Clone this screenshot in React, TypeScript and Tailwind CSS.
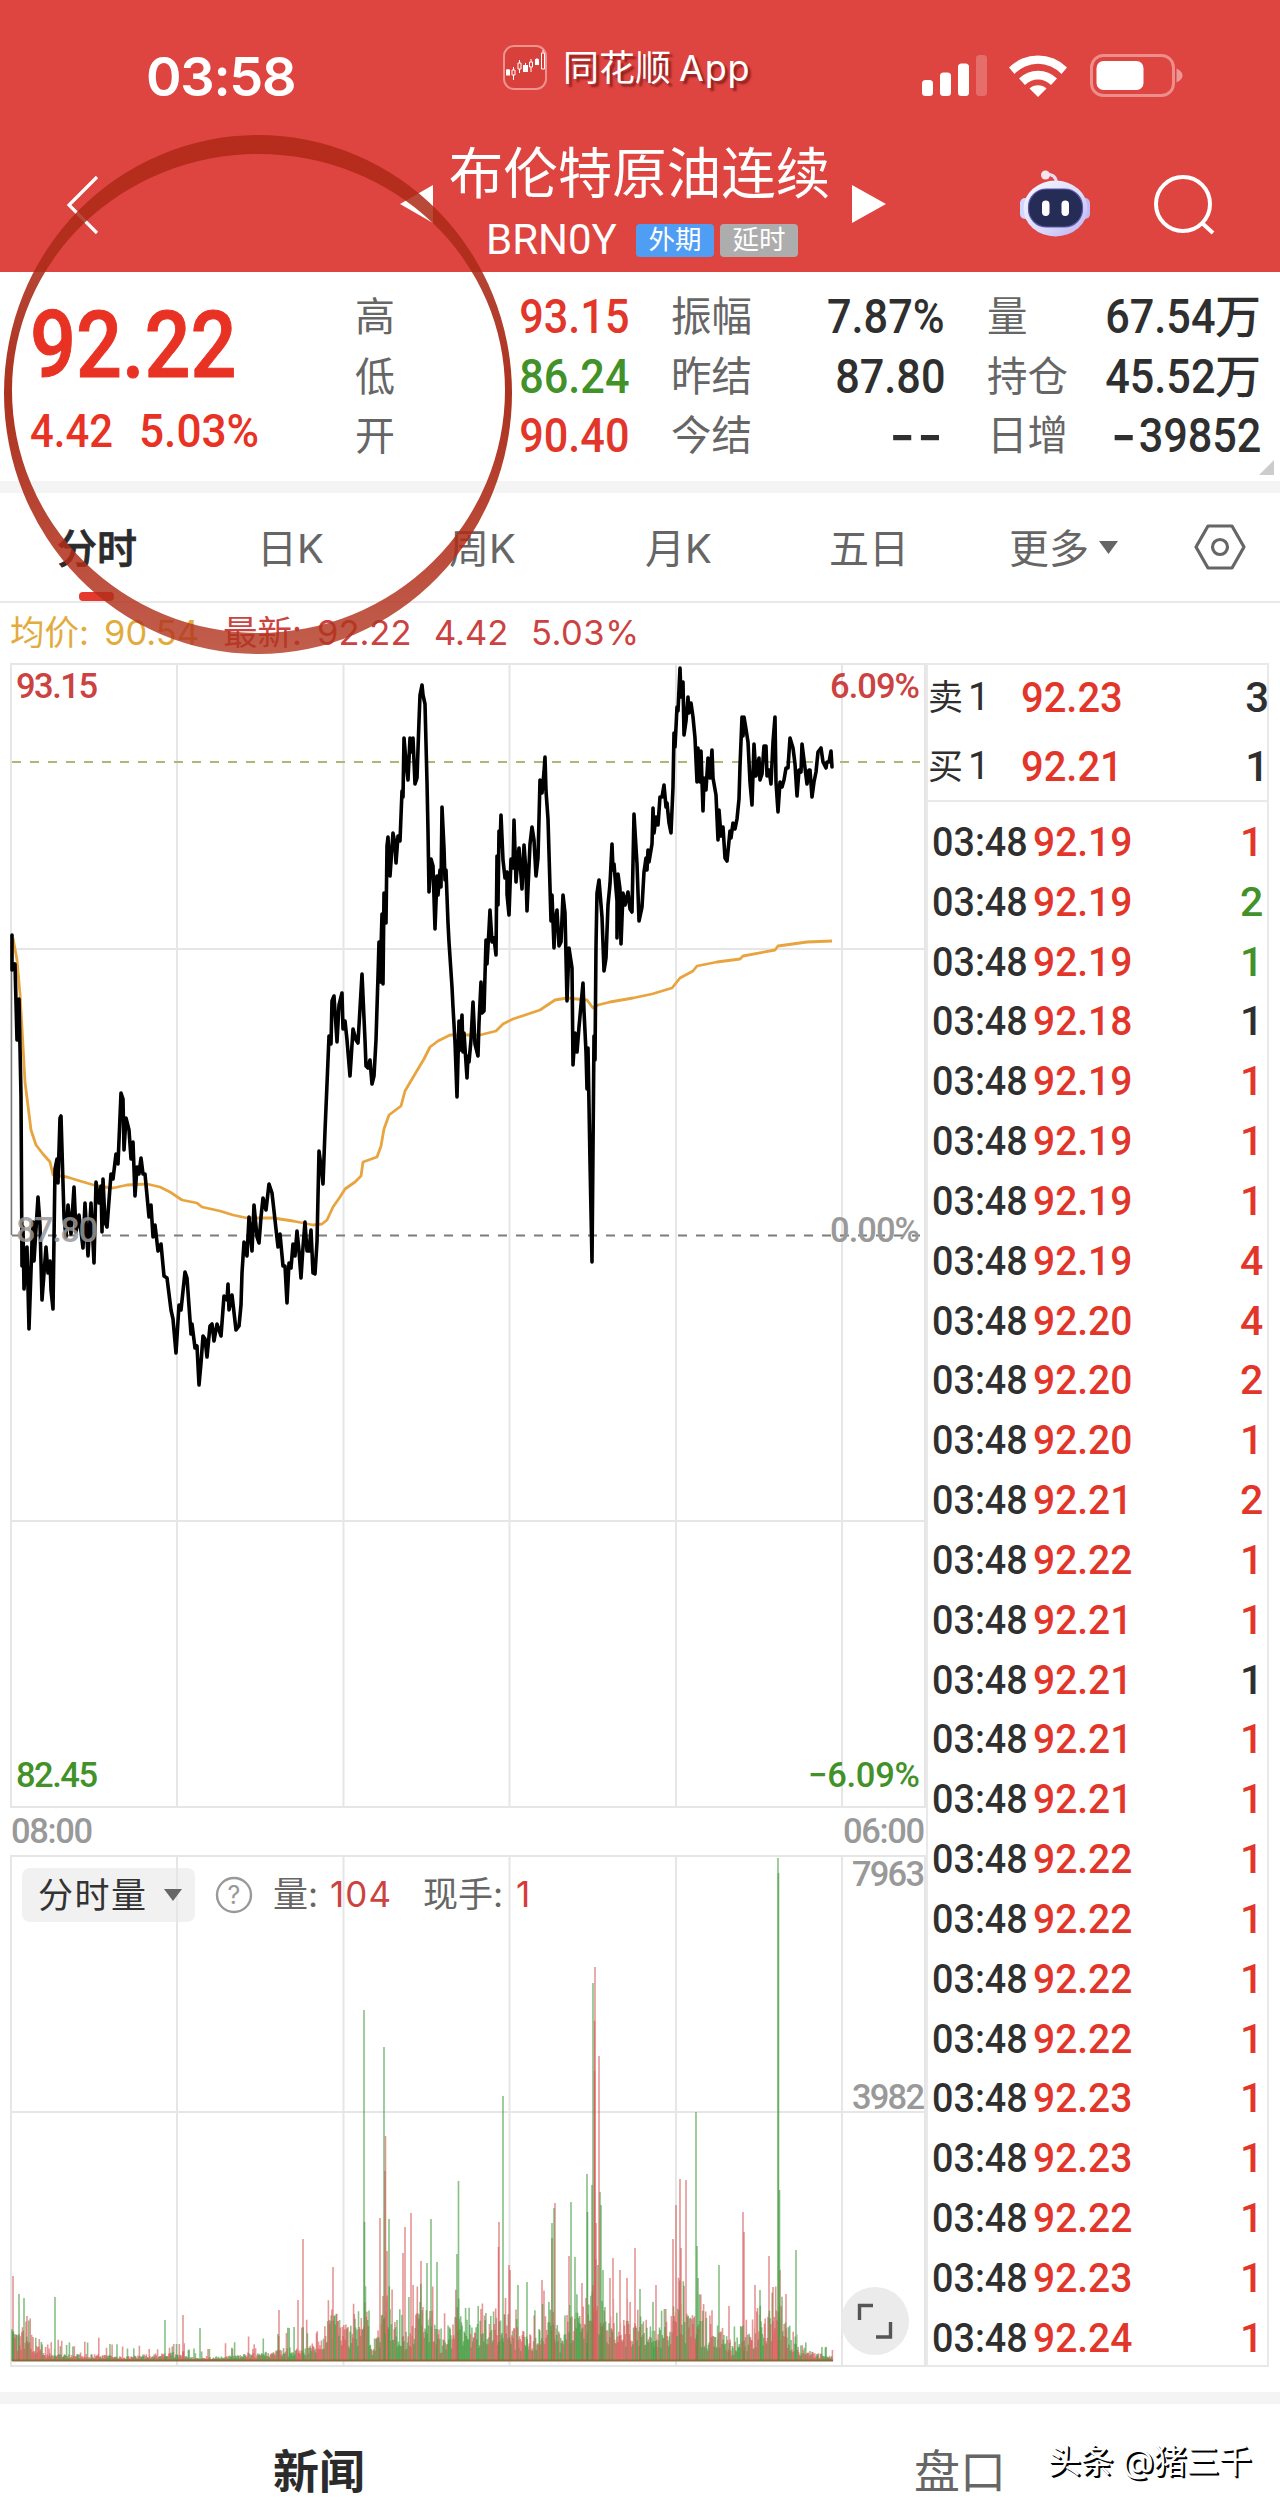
import type { ReactNode } from 'react';
import clsx from 'clsx';

type Tone = 'up' | 'down' | 'flat';

const TONE: Record<Tone, string> = {
  up: 'text-[#e3362b]',
  down: 'text-[#429129]',
  flat: 'text-[#2f2f2f]',
};

const QUOTES = [
  { label: '高', value: '93.15', tone: 'up' },
  { label: '低', value: '86.24', tone: 'down' },
  { label: '开', value: '90.40', tone: 'up' },
] as const;

const TICKS: [string, number, Tone][] = [
  ['92.19', 1, 'up'],
  ['92.19', 2, 'down'],
  ['92.19', 1, 'down'],
  ['92.18', 1, 'flat'],
  ['92.19', 1, 'up'],
  ['92.19', 1, 'up'],
  ['92.19', 1, 'up'],
  ['92.19', 4, 'up'],
  ['92.20', 4, 'up'],
  ['92.20', 2, 'up'],
  ['92.20', 1, 'up'],
  ['92.21', 2, 'up'],
  ['92.22', 1, 'up'],
  ['92.21', 1, 'up'],
  ['92.21', 1, 'flat'],
  ['92.21', 1, 'up'],
  ['92.21', 1, 'up'],
  ['92.22', 1, 'up'],
  ['92.22', 1, 'up'],
  ['92.22', 1, 'up'],
  ['92.22', 1, 'up'],
  ['92.23', 1, 'up'],
  ['92.23', 1, 'up'],
  ['92.22', 1, 'up'],
  ['92.23', 1, 'up'],
  ['92.24', 1, 'up'],
];

const PRICE =
  '12,935 12,970 15,964 17,1040 19,999 21,1096 22,1266 23,1227 24,1289 27,1247 29,1329 32,1242 33,1222 34,1261 38,1197 40,1225 42,1300 46,1247 48,1273 50,1261 51,1290 53,1309 55,1169 57,1159 58,1183 60,1118 61,1116 64,1217 66,1237 68,1205 71,1234 74,1187 76,1232 79,1215 83,1248 85,1203 88,1256 91,1203 94,1263 96,1182 99,1203 101,1186 102,1232 103,1179 105,1222 107,1227 111,1174 113,1179 116,1154 118,1164 121,1093 123,1099 124,1150 126,1118 129,1130 131,1159 133,1142 135,1196 137,1167 139,1174 141,1158 143,1174 145,1174 149,1217 151,1205 153,1237 155,1225 158,1251 161,1244 164,1276 167,1278 171,1310 173,1319 176,1353 179,1305 181,1310 185,1272 187,1278 191,1334 192,1324 195,1348 197,1346 199,1385 201,1363 203,1336 205,1339 207,1357 210,1326 212,1324 214,1341 217,1324 221,1336 224,1296 227,1300 228,1284 229,1310 232,1295 236,1330 239,1326 241,1305 242,1273 244,1242 247,1256 249,1217 252,1251 254,1205 257,1237 259,1243 261,1217 263,1198 266,1210 269,1184 272,1193 275,1220 278,1247 280,1234 283,1266 285,1266 287,1303 289,1263 291,1268 293,1244 295,1256 297,1231 299,1251 301,1278 303,1247 305,1222 307,1251 309,1251 311,1230 313,1273 315,1274 317,1242 319,1151 322,1174 323,1184 325,1131 327,1084 329,1036 331,1044 332,1001 334,996 337,1042 339,1005 342,993 343,1029 345,1021 347,1040 350,1076 353,1029 356,1040 358,1043 362,974 365,1040 366,1066 368,1068 370,1060 372,1084 374,1076 376,1040 378,976 379,942 380,982 382,914 383,984 384,893 386,923 387,846 388,837 390,876 393,833 395,844 396,863 398,836 400,841 402,791 403,797 404,738 406,762 408,780 410,738 412,752 413,738 415,784 417,778 419,721 420,695 422,685 423,695 425,704 427,782 428,831 429,892 431,859 433,866 435,929 437,876 438,895 440,870 441,887 442,807 444,848 445,880 446,870 448,923 449,942 452,987 453,1007 455,1042 457,1097 459,1021 460,1050 462,1015 463,1052 464,1033 467,1078 468,1056 469,1062 471,1040 473,1002 475,1044 478,1056 479,1023 481,982 482,1013 484,1011 486,940 487,964 489,929 490,910 492,942 494,938 496,955 497,856 498,905 499,831 500,846 501,815 503,860 505,878 507,872 507,894 509,915 511,859 513,868 514,820 516,882 518,856 519,848 522,889 524,845 526,872 527,911 530,844 532,827 534,840 536,876 538,858 540,780 542,793 544,772 545,757 546,791 548,819 551,921 552,895 554,948 555,921 557,910 559,946 561,942 563,895 565,913 567,1001 569,948 572,968 573,1065 575,1033 577,1052 579,1027 583,983 584,1011 586,1052 587,1089 588,1048 590,1162 592,1262 594,1036 595,1060 596,946 597,893 599,880 602,917 604,971 606,958 608,905 610,884 612,844 613,870 614,864 617,901 617,938 618,874 620,889 621,944 623,893 625,905 628,892 630,909 632,912 634,814 637,864 639,921 642,907 644,872 646,858 647,870 648,850 649,862 652,844 653,808 654,833 656,817 658,825 660,797 662,797 664,785 666,807 667,803 669,823 671,833 673,787 674,733 675,747 677,707 678,711 680,668 681,697 683,682 684,735 686,721 688,697 689,713 691,703 693,717 695,738 697,782 698,748 700,782 701,751 703,811 704,778 706,790 708,758 710,778 712,750 713,778 716,795 718,840 719,810 721,836 723,827 725,858 727,861 730,831 731,838 733,823 735,829 737,819 739,799 740,766 742,717 743,736 744,717 746,729 748,742 750,782 752,805 754,744 756,776 759,758 760,780 762,774 764,746 766,746 767,776 769,770 771,784 773,742 775,717 776,782 778,812 780,782 782,787 784,780 786,768 788,768 790,738 793,748 795,764 797,796 799,770 801,772 802,744 805,768 807,784 809,770 810,770 812,797 814,782 816,772 818,752 821,748 823,762 826,768 827,762 829,762 831,751 832,767';

const AVERAGE =
  '13,938 17,960 20,994 22,1028 25,1082 28,1106 31,1130 36,1145 43,1154 50,1162 53,1175 67,1177 80,1181 97,1186 113,1188 127,1185 147,1184 160,1187 170,1192 182,1200 197,1203 202,1207 220,1211 233,1215 247,1218 273,1218 293,1221 313,1225 322,1224 327,1220 333,1207 340,1197 345,1189 355,1182 361,1176 363,1162 377,1157 381,1146 384,1129 389,1115 401,1106 405,1091 415,1074 424,1059 430,1047 438,1041 450,1035 480,1035 496,1031 503,1024 513,1019 540,1010 555,1000 567,998 587,1000 593,1008 598,1005 610,1002 633,998 652,994 672,988 680,978 693,971 697,966 717,962 740,959 743,956 775,950 778,946 807,942 832,941';

// [x, usual height, busy height]
const ENVELOPE: [number, number, number][] = [
  [12, 24, 48], [28, 30, 48], [42, 9, 20], [56, 7, 24], [72, 7, 18], [100, 6, 24], [130, 4, 14], [150, 7, 18],
  [175, 7, 24], [200, 3, 10], [230, 5, 22], [260, 8, 30], [285, 12, 36], [305, 13, 40], [320, 22, 58], [332, 48, 72],
  [346, 34, 56], [358, 38, 64], [366, 52, 80], [373, 10, 28], [386, 58, 110], [397, 32, 62], [408, 26, 70],
  [420, 54, 88], [432, 50, 84], [441, 16, 40], [457, 46, 76], [474, 32, 60], [490, 44, 58], [508, 44, 64],
  [518, 28, 50], [538, 28, 54], [551, 54, 100], [562, 18, 40], [572, 52, 98], [585, 34, 66], [595, 80, 140],
  [606, 44, 70], [620, 40, 72], [640, 34, 52], [665, 32, 54], [678, 56, 94], [690, 40, 64], [697, 48, 80],
  [708, 26, 50], [720, 34, 62], [732, 15, 34], [750, 26, 50], [764, 40, 64], [780, 52, 84], [788, 28, 44],
  [800, 14, 26], [815, 8, 20], [833, 4, 12],
];

const SPIKES: [number, number, 'r' | 'g'][] = [
  [13, 85, 'r'], [19, 67, 'g'], [24, 63, 'g'], [27, 45, 'r'], [55, 64, 'g'], [165, 41, 'g'], [183, 46, 'r'],
  [200, 33, 'g'], [279, 51, 'r'], [298, 61, 'r'], [303, 122, 'r'], [333, 94, 'r'], [364, 351, 'g'], [364.5, 139, 'g'],
  [384, 314, 'g'], [385.5, 225, 'r'], [385, 190, 'r'], [380, 143, 'r'], [389, 142, 'g'], [387, 110, 'r'],
  [403, 108, 'r'], [405, 134, 'r'], [411, 148, 'r'], [421, 100, 'r'], [427, 98, 'g'], [431, 142, 'g'],
  [437, 99, 'g'], [458.5, 180, 'g'], [457, 107, 'g'], [499, 139, 'r'], [498.5, 114, 'r'], [503, 265, 'g'],
  [509, 96, 'r'], [510, 91, 'r'], [518, 76, 'g'], [527, 79, 'g'], [542, 81, 'r'], [552, 138, 'g'], [554, 153, 'g'],
  [555, 158, 'r'], [552, 123, 'r'], [571, 159, 'g'], [569, 105, 'r'], [575, 104, 'g'], [582, 78, 'r'],
  [587, 187, 'g'], [587.5, 149, 'g'], [592, 176, 'g'], [593, 378, 'g'], [595, 394, 'r'], [594.5, 340, 'r'],
  [594.5, 290, 'r'], [599, 305, 'r'], [596, 138, 'r'], [600, 169, 'g'], [601, 156, 'g'], [603, 91, 'g'],
  [610, 83, 'r'], [613, 103, 'r'], [620, 91, 'r'], [627, 83, 'r'], [635, 113, 'r'], [640, 72, 'g'], [653, 59, 'g'],
  [656, 76, 'r'], [673, 122, 'r'], [676, 156, 'r'], [680, 182, 'r'], [681, 113, 'r'], [686, 181, 'r'],
  [696, 249, 'g'], [697, 115, 'g'], [698, 83, 'g'], [719, 96, 'g'], [729, 55, 'r'], [743, 149, 'r'],
  [744, 129, 'r'], [755, 76, 'r'], [760, 71, 'g'], [769, 105, 'r'], [773, 74, 'r'], [778, 503, 'g'],
  [778.5, 488, 'g'], [779.5, 171, 'g'], [780, 91, 'r'], [786, 67, 'r'], [796, 111, 'g'],
];

const VOLUME_BASE = 2361;

function buildVolume() {
  let seed = 20240;
  const rand = () => {
    seed = (seed * 16807) % 2147483647;
    return seed / 2147483647;
  };
  const bars: [number, number, 'r' | 'g'][] = [];
  let k = 0;
  let side: 'r' | 'g' = 'g';
  for (let x = 12; x < 833; x += 0.7) {
    while (k < ENVELOPE.length - 2 && x > ENVELOPE[k + 1][0]) k++;
    const [x0, b0, p0] = ENVELOPE[k];
    const [x1, b1, p1] = ENVELOPE[k + 1];
    const t = (x - x0) / (x1 - x0);
    const base = b0 + (b1 - b0) * t;
    const peak = p0 + (p1 - p0) * t;
    const h = rand() < 0.2 ? base + (peak - base) * rand() : base * (0.35 + rand() * 0.75);
    if (rand() < 0.4) side = side === 'r' ? 'g' : 'r';
    bars.push([x, Math.max(2, h), side]);
  }
  return [...bars, ...SPIKES];
}

const VOLUME = buildVolume();

const volumePath = (side: 'r' | 'g', part: number) =>
  VOLUME.filter((b, i) => b[2] === side && i % 3 === part)
    .map(([x, h]) => `M${x.toFixed(1)} ${VOLUME_BASE}v-${h.toFixed(1)}`)
    .join('');

function StatusBar() {
  return (
    <div className="flex h-[136px] items-start text-white">
      <div className="ml-[146px] mt-[46px] h-[62px] w-[152px] text-[54px] font-semibold leading-[62px] tracking-[-1.3px]">
        03:58
      </div>
      <svg className="ml-[205px] mt-[45px]" width="44" height="45" viewBox="0 0 44 45">
        <rect x="1" y="1" width="42" height="43" rx="10" fill="#d8403c" stroke="#f0928d" strokeWidth="2" />
        <path d="M5 24v6M10.500 22v13M16.500 15v13M22.500 18v9M28 14v13M34 13v7M40 5v19" stroke="#fff" strokeWidth="1" />
        <path d="M3 24.500h4v6H3zM20 20h5v7h-5zM32 14h4v6h-4z" fill="#fff" />
        <path d="M9 25h3v5H9zM15 18h3v6h-3zM26.500 17h3v5h-3zM38.500 8h3v16h-3z" fill="#d8403c" stroke="#fff" />
      </svg>
      <div className="ml-[16px] mt-[44px] flex h-[48px] w-[190px] gap-[8px] whitespace-nowrap text-[36px] leading-[48px] [text-shadow:3px_3px_2px_rgba(110,20,20,0.7)]">
        <span>同花顺</span>
        <span className="tracking-[0.8px]">App</span>
      </div>
      <svg className="ml-[169px] mt-[53px]" width="264" height="46" viewBox="0 0 264 46" fill="#fff">
        <rect x="0" y="27" width="11" height="16" rx="3.500" />
        <rect x="18" y="19.500" width="11" height="23.500" rx="3.500" />
        <rect x="36" y="10.500" width="11" height="32.500" rx="3.500" />
        <rect x="54" y="2" width="11" height="41" rx="3.500" opacity=".22" />
        <path d="M87 14.500a41 41 0 0 1 58 0l-5.500 6.500a32 32 0 0 0-47 0z" />
        <path d="M97 25.500a27 27 0 0 1 38 0l-6 6.500a18 18 0 0 0-26 0z" />
        <path d="M107.500 35.500a13 13 0 0 1 17 0L116 44z" />
        <rect x="169.500" y="2.500" width="82" height="40" rx="12" fill="none" stroke="#fff" strokeWidth="3" opacity=".4" />
        <rect x="174.500" y="8" width="47" height="29" rx="7" />
        <path d="M254.500 15.500q6 3 6 7t-6 7z" opacity=".45" />
      </svg>
    </div>
  );
}

function Robot() {
  return (
    <svg className="ml-[132px] mt-[34px]" width="74" height="68" viewBox="0 0 74 68">
      <defs>
        <linearGradient id="shell" x1="0" y1="0" x2="1" y2="1">
          <stop offset="0" stopColor="#f7f8ff" />
          <stop offset=".55" stopColor="#dcdcfb" />
          <stop offset="1" stopColor="#b9b0f0" />
        </linearGradient>
      </defs>
      <path d="M28 4q10 0 10.500 9" fill="none" stroke="#e6d8ee" strokeWidth="3" />
      <circle cx="27.500" cy="5" r="4.500" fill="#f5e6ee" />
      <rect x="2" y="28" width="10" height="21" rx="5" fill="#cfd6ff" />
      <rect x="62" y="28" width="10" height="21" rx="5" fill="#c3b8f5" />
      <ellipse cx="37.500" cy="38.500" rx="32" ry="28" fill="url(#shell)" />
      <rect x="10.500" y="19" width="54" height="38" rx="18" fill="#252c55" stroke="#5a55a8" strokeWidth="1.200" />
      <rect x="24" y="30.500" width="7.500" height="15.500" rx="3.700" fill="#fff" />
      <rect x="43.500" y="30.500" width="7.500" height="15.500" rx="3.700" fill="#fff" />
    </svg>
  );
}

function NavBar() {
  return (
    <div className="flex h-[136px] items-start text-white">
      <svg className="ml-[66px] mt-[39px]" width="33" height="60" viewBox="0 0 33 60">
        <path d="M31 2 3 30l28 28" fill="none" stroke="#fff" strokeWidth="3.200" />
      </svg>
      <svg className="ml-[301px] mt-[49px]" width="33" height="38" viewBox="0 0 33 38">
        <path d="M33 0v38L0 19z" fill="#fff" />
      </svg>
      <div className="ml-[15px] w-[383px]">
        <div className="mt-[5px] h-[64px] whitespace-nowrap text-center text-[54.5px] font-normal leading-[64px]">布伦特原油连续</div>
        <div className="mt-[18px] flex h-[34px] items-center pl-[38px]">
          <span className="w-[150px] font-[Roboto] text-[42px] leading-[34px]">BRN0Y</span>
          <span className="flex h-[33px] w-[78px] items-center justify-center rounded-[4px] bg-[#509df4] text-[26.5px]">外期</span>
          <span className="ml-[6px] flex h-[33px] w-[78px] items-center justify-center rounded-[4px] bg-[#adadad] text-[26.5px]">延时</span>
        </div>
      </div>
      <svg className="ml-[21px] mt-[49px]" width="34" height="38" viewBox="0 0 34 38">
        <path d="M0 0v38l34-19z" fill="#fff" />
      </svg>
      <Robot />
      <svg className="ml-[61px] mt-[38px]" width="64" height="62" viewBox="0 0 64 62" fill="none" stroke="#fff" strokeWidth="4">
        <circle cx="30" cy="30" r="27" />
        <path d="m49 49 11 10" />
      </svg>
    </div>
  );
}

function Column({ className, children }: { className: string; children: ReactNode }) {
  return <div className={clsx('flex shrink-0 flex-col pt-[15px] leading-[59.500px] whitespace-nowrap', className)}>{children}</div>;
}

const DIN = 'inline-block font-[Roboto] font-medium text-[48px] scale-x-[0.9]';

function Summary() {
  return (
    <div className="relative flex h-[209px] bg-white">
      <div className="w-[355px] pl-[30px] pt-[22px] text-[#e83224]">
        <div className="h-[104px] origin-left scale-x-[0.88] font-[Roboto] text-[92px] font-medium leading-[104px] [-webkit-text-stroke:1px_#e83224]">92.22</div>
        <div className="flex h-[66px] font-[Roboto] text-[47px] font-medium leading-[66px]">
          <span className="w-[109px] origin-left scale-x-[0.89]">4.42</span>
          <span className="w-[120px] origin-left scale-x-[0.94]">5.03%</span>
        </div>
      </div>
      <Column className="w-[141px] text-[40px] text-[#666]">
        {QUOTES.map((q) => (
          <span key={q.label}>{q.label}</span>
        ))}
      </Column>
      <Column className="w-[133px] items-end">
        {QUOTES.map((q) => (
          <span key={q.label} className={clsx(DIN, 'origin-right', TONE[q.tone])}>{q.value}</span>
        ))}
      </Column>
      <Column className="w-[120px] pl-[42px] text-[40.5px] text-[#666]">
        <span>振幅</span>
        <span>昨结</span>
        <span>今结</span>
      </Column>
      <Column className="w-[196px] items-end text-[#2f2f2f]">
        <span className={clsx(DIN, 'origin-right')}>7.87%</span>
        <span className={clsx(DIN, 'origin-right')}>87.80</span>
        <span className="text-[56px] font-medium tracking-[2px]">--</span>
      </Column>
      <Column className="w-[130px] pl-[42px] text-[40.5px] text-[#666]">
        <span>量</span>
        <span>持仓</span>
        <span>日增</span>
      </Column>
      <Column className="w-[186px] items-end text-[#2f2f2f]">
        <span className="flex">
          <span className={clsx(DIN, 'origin-right')}>67.54</span>
          <span className="text-[46px] font-medium">万</span>
        </span>
        <span className="flex">
          <span className={clsx(DIN, 'origin-right')}>45.52</span>
          <span className="text-[46px] font-medium">万</span>
        </span>
        <span className="flex">
          <span className="-mr-[12px] text-[56px] font-medium">-</span>
          <span className={clsx(DIN, 'origin-right')}>39852</span>
        </span>
      </Column>
      <div className="absolute bottom-[6px] right-[6px] h-[15px] w-[15px] bg-[#ccc] [clip-path:polygon(100%_0,100%_100%,0_100%)]" />
    </div>
  );
}

function Tabs() {
  return (
    <div className="flex h-[110px] items-center border-b-2 border-[#e9e9e9] text-[40px] text-[#666] whitespace-nowrap">
      <div className="relative flex h-full w-[257px] items-center pl-[57px] pt-[3px] font-medium text-[#2b2b2b] [-webkit-text-stroke:0.8px_#2b2b2b]">
        分时
        <span className="absolute bottom-0 left-[79px] h-[9px] w-[35px] rounded-[4px] bg-[#e5392f]" />
      </div>
      <span className="w-[192px] pt-[3px]">日K</span>
      <span className="w-[196px] pt-[3px]">周K</span>
      <span className="w-[184px] pt-[3px]">月K</span>
      <span className="w-[180px] pt-[3px]">五日</span>
      <span className="w-[90px] pt-[3px]">更多</span>
      <svg width="19" height="13" viewBox="0 0 19 13">
        <path d="M0 0h19L9.500 13z" fill="#666" />
      </svg>
      <svg className="ml-[76px]" width="52" height="48" viewBox="0 0 52 48" fill="none" stroke="#666" strokeWidth="3.200">
        <path d="M14 3h24l12 21-12 21H14L2 24z" strokeLinejoin="round" />
        <circle cx="26" cy="24" r="7.500" />
      </svg>
    </div>
  );
}

function Legend() {
  return (
    <div className="flex h-[60px] items-center pl-[10px] text-[34.5px] text-[#cb4241] whitespace-nowrap">
      <span className="w-[94px] text-[#e2ab3e]">均价:</span>
      <span className="w-[119px] text-[#e2ab3e]">90.54</span>
      <span className="w-[94px]">最新:</span>
      <span className="w-[117px]">92.22</span>
      <span className="w-[97px]">4.42</span>
      <span className="tracking-[0.5px]">5.03%</span>
    </div>
  );
}

function Chart() {
  return (
    <svg className="block shrink-0" width="926" height="1706" viewBox="0 663 926 1706">
      <g stroke="#e6e6e6" strokeWidth="2" fill="none">
        <path d="M11 664H925V1807H11zM177 664V1807M343.500 664V1807M509.500 664V1807M676 664V1807M842 664V1807M11 949H925M11 1521H925" />
        <path d="M11 1856H925V2366H11zM343.500 1856V2366M509.500 1856V2366M676 1856V2366M842 1856V2366M11 2112H925" />
      </g>
      <rect x="22" y="1868" width="173" height="54" rx="8" fill="#f1f1f1" />
      <path d="M177 1856V2366" stroke="#e6e6e6" strokeWidth="2" />
      <path d="M12 762H920" stroke="#b4b476" strokeWidth="1.800" strokeDasharray="9 9" />
      <path d="M12 1235.500H920" stroke="#7c7c7c" strokeWidth="1.800" strokeDasharray="9 9" />
      <path d="M11.500 935V1235" stroke="#777" strokeWidth="1.500" />
      <polyline points={AVERAGE} fill="none" stroke="#e8a43e" strokeWidth="2.800" strokeLinejoin="round" />
      <polyline points={PRICE} fill="none" stroke="#000" strokeWidth="3.600" strokeLinejoin="round" strokeLinecap="round" />

      {[0, 1, 2].map((n) => (
        <g key={n} strokeWidth="1.600" strokeOpacity=".62">
          <path d={volumePath('r', n)} stroke="#d95555" />
          <path d={volumePath('g', n)} stroke="#3f9a3c" />
        </g>
      ))}
      <path d="M12 2360.500H833" stroke="#8a6a3c" strokeWidth="2" />

      <g fontFamily="Roboto" fontWeight="500" fontSize="34.500">
        <text x="16" y="697.500" textLength="82" fill="#cb4241">93.15</text>
        <text x="830" y="697.500" textLength="90" fill="#cb4241">6.09%</text>
        <text x="16" y="1242" textLength="82" fill="#999" fillOpacity=".85">87.80</text>
        <text x="830" y="1242" textLength="90" fill="#999">0.00%</text>
        <text x="16" y="1786.500" textLength="82" fill="#429129">82.45</text>
        <text x="808" y="1786.500" textLength="112" fill="#429129">−6.09%</text>
        <g fill="#999">
          <text x="11" y="1843" textLength="82">08:00</text>
          <text x="843" y="1843" textLength="82">06:00</text>
          <text x="852" y="1886" textLength="73">7963</text>
          <text x="852" y="2109" textLength="73">3982</text>
        </g>
      </g>

      <g fontFamily="Inter, 'Noto Sans CJK SC', sans-serif" fontSize="35">
        <text x="38" y="1908" textLength="108" fill="#333">分时量</text>
        <path d="M164 1889h18l-9 12z" fill="#666" />
        <circle cx="234" cy="1895" r="17" fill="none" stroke="#999" strokeWidth="2.400" />
        <text x="234" y="1904" fontSize="25" fill="#999" textAnchor="middle">?</text>
        <text x="273" y="1907" fill="#666">量:</text>
        <text x="330" y="1907" textLength="61" fill="#cb4241">104</text>
        <text x="423" y="1907" fill="#666">现手:</text>
        <text x="516" y="1907" fill="#d93a33">1</text>
      </g>

      <circle cx="875" cy="2321" r="34" fill="#ebebeb" />
      <path d="M859.500 2320v-14.500H873M890.500 2322v15H876" fill="none" stroke="#555" strokeWidth="3.400" />
    </svg>
  );
}

function BookRow({ side, price, size }: { side: string; price: string; size: string }) {
  return (
    <div className="flex h-[69px] items-center text-[#2f2f2f]">
      <span className="w-[93px] text-[35px] font-[Roboto,'Noto_Sans_CJK_SC']">
        {side}
        <span className="ml-[5px] text-[39px]">1</span>
      </span>
      <span className="flex-1 origin-left scale-x-[0.95] font-[Roboto] text-[42px] font-medium text-[#e3362b]">{price}</span>
      <span className="-mr-[2px] font-[Roboto] text-[42px] font-medium">{size}</span>
    </div>
  );
}

function OrderPanel() {
  return (
    <div className="h-[1704px] w-[343px] border-2 border-[#e9e9e9]">
      <div className="-mt-[2px] h-[139px] border-b-2 border-[#e9e9e9]">
        <BookRow side="卖" price="92.23" size="3" />
        <BookRow side="买" price="92.21" size="1" />
      </div>
      <div className="pt-[11px] font-[Roboto] text-[41px] font-medium leading-[59.840px]">
        {TICKS.map(([price, size, tone], i) => (
          <div key={i} className="flex h-[59.840px]">
            <span className="w-[101px] origin-left translate-x-[4px] scale-x-[0.92] text-[#2f2f2f]">03:48</span>
            <span className="w-[211px] origin-left translate-x-[4px] scale-x-[0.95] text-[#e3362b]">{price}</span>
            <span className={TONE[tone]}>{size}</span>
          </div>
        ))}
      </div>
    </div>
  );
}

// Hand-drawn ring laid over the header and the quote block
function Marker() {
  return (
    <svg className="pointer-events-none absolute left-0 top-[130px]" width="520" height="530" viewBox="0 130 520 530">
      <defs>
        <linearGradient id="ink" x1="0" y1="0" x2="0" y2="1">
          <stop offset="0" stopColor="#b02817" stopOpacity=".86" />
          <stop offset=".2" stopColor="#ab2a17" stopOpacity=".85" />
          <stop offset=".5" stopColor="#a82a16" stopOpacity=".96" />
          <stop offset=".8" stopColor="#b02c18" stopOpacity=".85" />
          <stop offset="1" stopColor="#b23620" stopOpacity=".8" />
        </linearGradient>
      </defs>
      <path
        fill="url(#ink)"
        fillRule="evenodd"
        d="M4 393a254 258 0 0 1 508 0a254 261 0 0 1-508 0zM12 390a246.500 236 0 0 1 493 0a246.500 243 0 0 1-493 0z"
      />
    </svg>
  );
}

export default function App() {
  return (
    <div className="relative flex h-[2506px] w-[1280px] flex-col overflow-hidden bg-white font-[Inter,'Noto_Sans_CJK_SC',sans-serif]">
      <header className="bg-[#de4440]">
        <StatusBar />
        <NavBar />
      </header>
      <Summary />
      <div className="h-[12px] bg-[#f4f4f4]" />
      <Tabs />
      <Legend />
      <div className="flex h-[1729px] items-start">
        <Chart />
        <OrderPanel />
      </div>
      <div className="h-[12px] shrink-0 bg-[#f4f4f4]" />
      <footer className="flex h-[102px] items-start whitespace-nowrap">
        <span className="ml-[273px] mt-[34px] w-[641px] text-[46px] font-bold leading-[66px] text-[#2b2b2b]">新闻</span>
        <span className="mt-[34px] w-[134px] text-[46px] leading-[66px] text-[#666]">盘口</span>
        <span className="mt-[34px] text-[33px] leading-[46px] tracking-[-0.4px] text-white [text-shadow:2px_2px_0_#000,1px_1px_0_#000]">头条 @猪三千</span>
      </footer>
      <Marker />
    </div>
  );
}
